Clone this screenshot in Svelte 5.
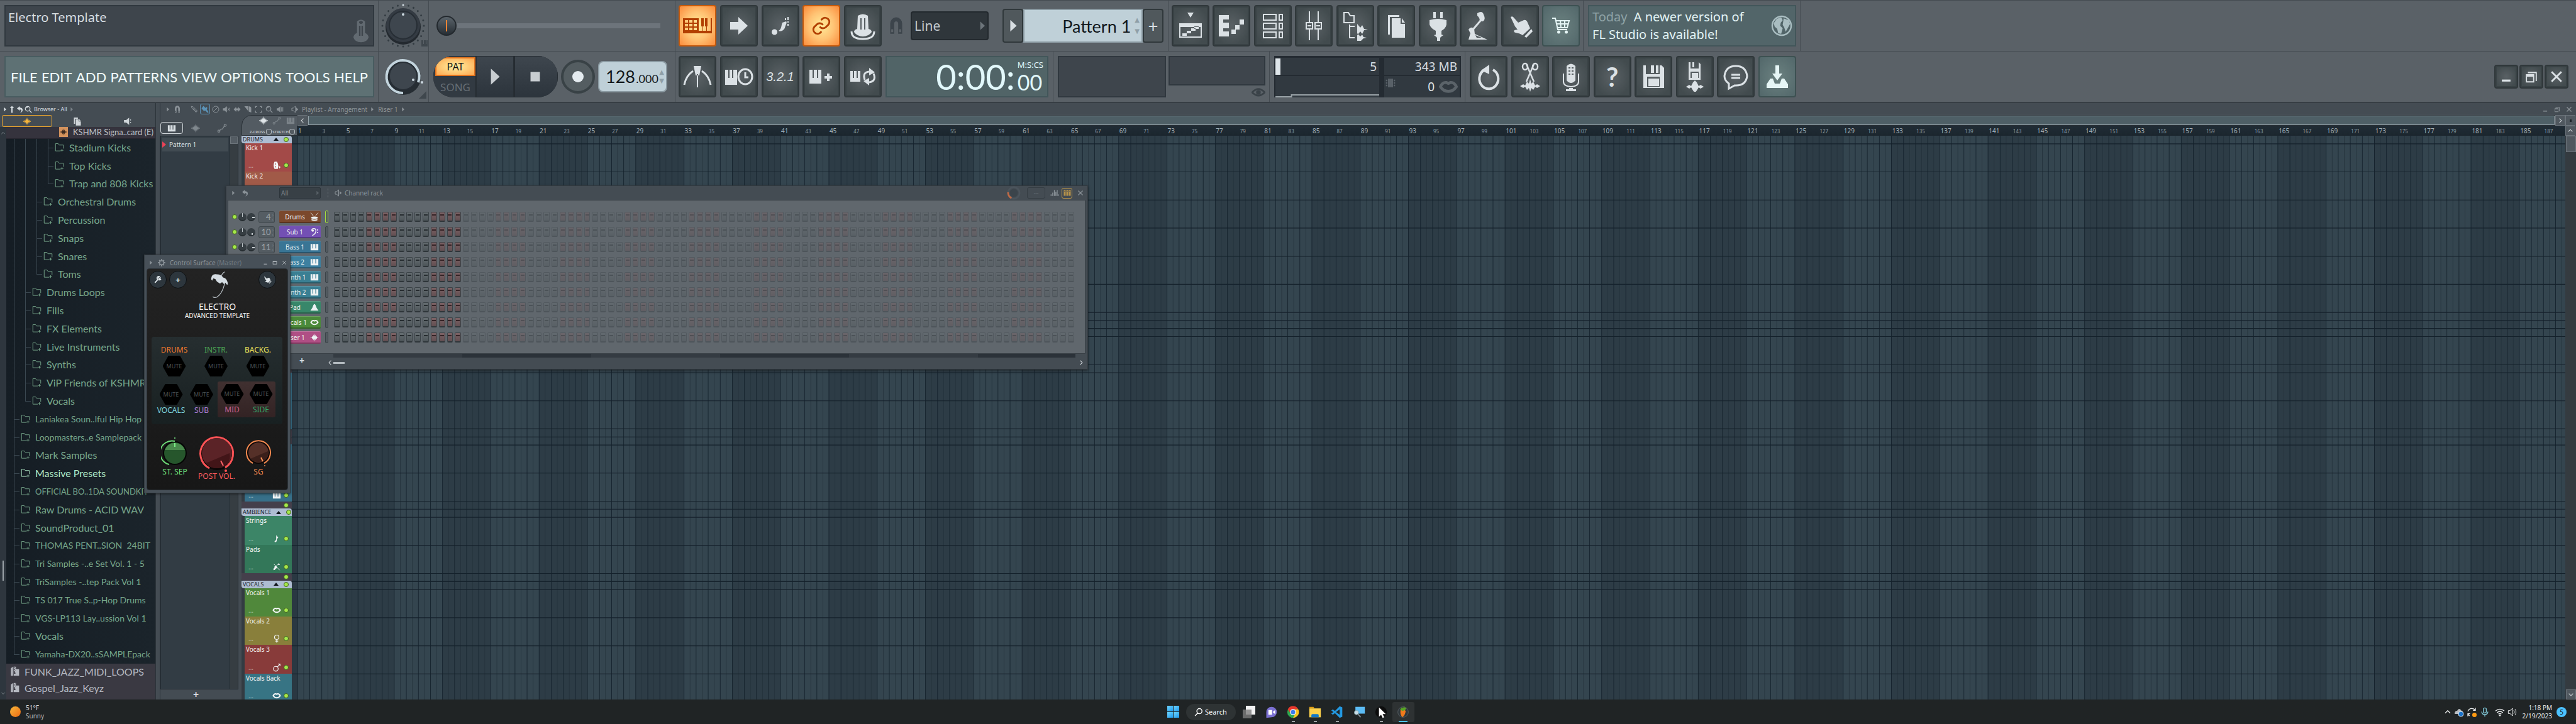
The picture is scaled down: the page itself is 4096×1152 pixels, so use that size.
<script>
  const wave = 'M2 24l4-3 3 3 3-9 3 6 3-13 3 9 3-15 3 15 3-9 3 13 3-6 3 9 3-3 4 3-4 3-3-3-3 9-3-6-3 13-3-9-3 15-3-15-3 9-3-13-3 6-3-9-3 3z';
  const ICONS = {
    pianogrid: { f: 'M1 12h46v24H1zM4 15v4h5v-4zM11 15v4h5v-4zM18 15v4h5v-4zM4 21v4h5v-4zM11 21v4h5v-4zM18 21v4h5v-4zM4 27v4h5v-4zM11 27v4h5v-4zM18 27v4h5v-4zM26 12v20h6v-7h-2V12zM34 12v13h-1v7h5v-7h-2V12zM40 12v13h-1v7h6V12z' },
    arrow: { f: 'M10 18h13v-8l15 14-15 14v-8H10z' },
    slide: { f: 'M10 34a4 4 0 1 1 9 0 4 4 0 1 1-9 0M21 32c5-3 4-8 6-13l6-2c2 2-1 6-2 10-1 3-5 7-10 5zM35 10h2v5h-2zM31 12h2v3h-2zM35 17h2v2h-2zM35 21h2v3h-2z' },
    link: { v: '0 0 24 24', w: 2.2, s: 'M10 13a5 5 0 0 0 7.5.5l3-3a5 5 0 0 0-7-7l-1.800 1.700M14 11a5 5 0 0 0-7.500-.5l-3 3a5 5 0 0 0 7 7l1.700-1.700' },
    knob: { f: 'M16 8q8-5 16 0l1 21q5 1 5 5-5 7-14 7t-14-7q0-4 5-5zM20 12v18h2V12zM26 12v18h2V12z', s: 'M6 33q0 12 18 12t18-12', w: 3 },
    thermo: { f: 'M16 5q8-7 16 0v23q8 4 7 10-3 9-15 9T9 38q-1-6 7-10zM20 6q0 4 4 4t4-4q-4-4-8 0zM20 14v20h3V14zM25 14v20h3V14z' },
    magnet: { f: 'M12 40V20a12 13 0 0 1 24 0v20h-8V20q0-5-4-5t-4 5v20zM14 31v6h4v-6zM30 31v6h4v-6z' },
    metronome: { f: 'M18 7h12l-3 15h-6zM23 20h2v21h-2z', s: 'M3 37Q6 22 17 15M45 37Q42 22 31 15', w: 3 },
    pianoclock: { f: 'M2 13h5v13h2V13h4v13h2V13h6v24H2z', s: 'M23 24a11 12 0 1 1 22 0 11 12 0 1 1-22 0M34 17v8h5', w: 3 },
    pianoplus: { f: 'M5 13h5v13h2V13h5v13h2V13h5v22H5zM33 19h4v4h4v4h-4v4h-4v-4h-4v-4h4z' },
    pianocycle: { f: 'M4 15h4v11h2V15h4v11h2V15h4v17H4zM34 10l9 7-9 5zM34 38l-9-7 9-5z', s: 'M27 29Q23 17 34 16M41 19Q46 31 34 33', w: 3 },
    playlist: { f: 'M19 3h10l-5 8zM6 20h36v6H6zM11 36h7v4h-7zM18 32h7v4h-7zM25 28h7v4h-7zM30 25h7v4h-7z', s: 'M7 21h34v21H7z', w: 2 },
    roll: { f: 'M4 7h16v7h-9v5h9v9h-9v5h9v8H4zM24 30h7v7h-7zM30 23h7v7h-7zM37 14h7v8h-7z' },
    rack: { s: 'M9 6h20v9H9zM34 6h5v9h-5zM9 20h20v9H9zM34 20h5v9h-5zM9 34h20v9H9zM34 34h5v9h-5z', w: 2 },
    chip: { f: 'M12 4h24v40H12zM2 8h7v8H2zM2 20h7v8H2zM2 32h7v8H2zM39 8h7v8h-7zM39 20h7v8h-7zM39 32h7v8h-7z' },
    mixer: { s: 'M17 1v18M31 1v18M17 29v18M31 29v18M12 19h10v10H12zM26 19h10v10H26zM14 24h6M28 24h6', w: 2 },
    tree: { f: 'M27 21l5 6 3-4 3 6 6 1-6 1-3 6-3-4-5 6zM27 36l5 5 3-3 2 4 5 1-5 1-4 4-6 1z', s: 'M6 3h7l3 5h6v11H6zM23 25h-8v18h8M15 25v-3', w: 2 },
    pages: { f: 'M11 7h18v3H14v28h-3zM17 12h14v9h7v22H17zM33 12l5 7h-5z' },
    plug: { f: 'M17 2h4v10h-4zM28 2h4v10h-4zM11 15q13-4 27 0v7q-1 6-8 10v6l3 1-3 2-2 2v5h-5v-5l-2-2-3-2 3-1v-6q-8-4-10-10z' },
    lamp: { f: 'M22 4q8-5 10 2 4 8-1 11l-5 0q0-6-4-9zM8 30q4-6 9-1l1 8 20 9H8l3-10zM19 39l2 4h8z', s: 'M15 30l12-14', w: 3 },
    hand: { f: 'M9 10q3-2 5 1l7 8 9-4q4-1 6 4l4 9-12 11q-4-3-11-4-4-1-2-4l5-1-4-5zM31 41l11-12 2 4-10 10z' },
    cart: { s: 'M10 12h5l4 18h15M16 16h21l-3 11H19M17 21h19M23 16l1 11M30 16v11', w: 2, f: 'M18 34a2.500 2.500 0 1 1 5 0 2.500 2.500 0 1 1-5 0M30 34a2.500 2.500 0 1 1 5 0 2.500 2.500 0 1 1-5 0' },
    globe: { s: 'M5 24a19 19 0 1 1 38 0 19 19 0 1 1-38 0', w: 3, f: 'M8 19l6-9 9-3 3 6-4 5-1 6 5 5-3 11-6-1-2-9-5-4zM28 9l10 4 3 7-5 9-4 7-3-9-3-5z' },
    eye: { s: 'M2 24q22-24 44 0-22 22-44 0z', w: 6, f: 'M16 24a8 8 0 1 1 16 0 8 8 0 1 1-16 0' },
    undo: { s: 'M31 13A15 16 0 1 1 16 14', w: 4, f: 'M12 14l13-9v15z' },
    cut: { s: 'M18 4l12 28M30 4L18 32M12 8a4 5 0 1 1 8 0 4 5 0 1 1-8 0M28 8a4 5 0 1 1 8 0 4 5 0 1 1-8 0', w: 2.500, f: 'M8 39l5-3 3 2 3-6 3 3 2-7 2 7 3-3 3 6 3-2 5 3-5 3-3-2-3 5-3-3-2 6-2-6-3 3-3-5-3 2z' },
    mic: { f: 'M17 7q7-7 14 0v23q-7 8-14 0zM20 9v2h3V9zM25 9v2h3V9zM20 14v2h3v-2zM25 14v2h3v-2zM20 19v2h3v-2zM25 19v2h3v-2zM21 42h6v2h5v3H16v-3h5z', s: 'M12 19v13q0 7 12 8 12-1 12-8V19', w: 2 },
    floppy: { f: 'M8 6h4v14h22V6h3l4 4v32H8zM20 6h5v12h-5zM28 6h4v12h-4zM14 24v16h20V24z M16 27h17v12H16z' },
    floppywave: { f: 'M14 1h3v10h13V1l3 3v25H14zM20 1h3v8h-3zM17 16v10h13V16zM19 18h10v8H19zM10 40l5-3 3 2 3-6 3-3 3 3 3 6 3-2 5 3-5 3-3-2-3 5-3 4-3-4-3-5-3 2z' },
    chat: { s: 'M13 35q-7-5-7-12 2-16 18-16t18 16q-2 16-20 15l-9 5zM17 21h14M17 26h14', w: 3 },
    download: { f: 'M21 6h6v13h5l-8 11-8-11h5zM13 27l4 0 3 8h8l3-8h4l6 9v6H7v-6z' },
    minus: { f: 'M9 34h30v7H9z' },
    restore: { f: 'M12 7h31v32h-4V12H12zM5 15h29v29H5zM9 24v16h21V24z' },
    max: { f: 'M4 8h40v32H4zM9 18v17h30V18z' },
    close: { s: 'M7 7l34 34M41 7L7 41', w: 6 },
    wave: { f: wave },
    note: { f: 'M22 4q2 8 10 13-1 5-3 8-1-6-5-7v20q-6 9-12 3 0-8 8-8z' },
    sax: { f: 'M34 4l8 6-4 4-8-2-8 9 4 5q-2 8-8 8-3 8-10 8-6-8 4-14-2-8 6-10l5-1z', s: 'M8 8l32 34', w: 3 },
    kick: { f: 'M12 4h14q10 18 4 40H12Q2 24 12 4zM14 12v10h4V12zM14 27v9h4v-9zM34 26l11 7-6 9z' },
    lips: { s: 'M5 24q5-11 14-10l5 2 5-2q9-1 14 10-7 11-19 11T5 24z', w: 7 },
    female: { s: 'M12 17a12 12 0 1 1 24 0 12 12 0 1 1-24 0M24 29v17M16 38h16', w: 4 },
    male: { s: 'M6 31a13 13 0 1 1 26 0 13 13 0 1 1-26 0M28 21L42 5M31 5h11v11', w: 4 },
    piano: { f: 'M3 8h10v24h4V8h12v24h4V8h12v34H3z' },
    auto: { s: 'M4 38a5 5 0 1 1 10 0 5 5 0 1 1-10 0M34 10a5 5 0 1 1 10 0 5 5 0 1 1-10 0M13 35l7-7h6l9-14', w: 4 },
    speaker: { f: 'M4 17h12L32 4v40L16 31H4zM38 14h4v6h-4zM38 28h4v6h-4z' },
    speakerOut: { s: 'M4 16h9l13-12v40L13 32H4z', w: 4, f: 'M32 12l13 12-13 12z' },
    tri: { f: 'M14 4l22 20-22 20z' },
    up: { f: 'M20 46V16h-9L24 2l13 14h-9v30z' },
    back: { f: 'M4 18L22 4v9q20 1 18 17-2 12-16 16 10-9 8-16-2-6-10-6v9z' },
    mag: { s: 'M5 20a15 15 0 1 1 30 0 15 15 0 1 1-30 0M31 31l14 14M13 16q3-6 9-5', w: 5 },
    pencil: { s: 'M5 5l12 3 26 26-8 9L9 17zM15 17l22 22', w: 4 },
    brush: { f: 'M14 2l14 14 3-9 8 8-4 10 12 17-9 4-10-14-12 2L2 18z' },
    no: { s: 'M4 24a20 20 0 1 1 40 0 20 20 0 1 1-40 0M38 10L10 38', w: 4 },
    mute: { f: 'M2 17h9L27 4v40L11 31H2z', s: 'M32 14l14 20M46 14L32 34', w: 4 },
    slip: { f: 'M2 24L18 8v10h12V8l16 16-16 16V30H18v10z' },
    slice: { f: 'M2 4l24 0v30zM30 4q16 2 16 12v28L30 38z' },
    sel: { s: 'M5 16V5h10M33 5h10v11M43 32v11H33M15 43H5V32', w: 5 },
    play2: { f: 'M4 17h8L28 4v40L12 31H4zM33 10h4v28h-4zM41 10h4v28h-4z' },
    files: { f: 'M5 3h22v7H12v28H5zM16 13h15v12h12v22H16zM34 12l9 10h-9z' },
    folder: { s: 'M30 42H4V5h14l5 7h21v18M37 32v14M30 39h14', w: 3 },
    zip: { f: 'M4 10l10-8v44H4zM17 2h8v4h-5v4h5v4h-5v4h5v4h-5v4l-2 10h8l-2-10h0V2h4v12h15v32H17z' },
    drum: { f: 'M6 26q18-8 36 0v6q-18 7-36 0zM8 36q16 6 32 0v7q-16 6-32 0z', s: 'M4 2l14 18M44 2L30 18', w: 3 },
    bassclef: { s: 'M10 18q-3-12 10-12t12 12q0 16-20 26', w: 5, f: 'M9 17a6 6 0 1 1 12 0 6 6 0 1 1-12 0M38 10h6v6h-6zM38 24h6v6h-6z' },
    pad: { f: 'M2 42Q14 28 18 12q6-12 12 0 4 16 16 30z' },
    wrench: { s: 'M8 41l18-20M40 12l-7 7-6-5 5-7q-10-2-12 6t6 11q9 4 15-3', w: 6 },
    gear: { s: 'M11 24a13 13 0 1 1 26 0 13 13 0 1 1-26 0', w: 6, f: 'M20 1h8v8h-8zM20 39h8v8h-8zM1 20h8v8H1zM39 20h8v8h-8zM6 10l5-5 6 6-5 5zM31 37l5-5 6 6-5 5zM6 38l5 5 6-6-5-5zM31 11l5 5 6-6-5-5z' },
    bars: { f: 'M2 32h5v8H2zM11 22h5v18h-5zM20 8h5v32h-5zM28 18h5v22h-5zM36 8h4v32h-4zM43 32h4v8h-4z' },
    steps: { f: 'M2 6h12v36H2zM18 6h12v36H18zM34 6h12v36H34zM5 12v3h6v-3zM21 12v3h6v-3zM37 12v3h6v-3z' },
    left: { s: 'M31 8L15 24l16 16', w: 5 },
    right: { s: 'M17 8l16 16-16 16', w: 5 },
    chup: { s: 'M8 31l16-16 16 16', w: 5 },
    chdown: { s: 'M8 17l16 16 16-16', w: 5 },
    search: { s: 'M14 19a14 14 0 1 1 28 0 14 14 0 1 1-28 0M18 30L4 45', w: 5 },
    wifi: { s: 'M3 19q21-18 42 0M10 27q14-12 28 0M17 34q7-6 14 0', w: 4, f: 'M20 40a4 4 0 1 1 8 0 4 4 0 1 1-8 0' },
    vol: { s: 'M4 17h8L24 6v36L12 31H4zM30 16q6 8 0 16M36 10q10 14 0 28', w: 3 },
    taskmic: { s: 'M17 8q7-8 14 0v16q-7 9-14 0zM9 22q2 14 15 14t15-14M24 36v10', w: 4 },
    sync: { s: 'M6 20Q14 2 34 9l8 6M42 4v12H31M6 44V32h11M6 33l8 9', w: 4 }
  };

  const topLeft = [['pianogrid', 'Typing keyboard', 'on'], ['arrow', 'Step edit'], ['slide', 'Slide'], ['link', 'Multilink', 'on'], ['knob', 'Controllers']];
  const botLeft = [['metronome', 'Metronome'], ['pianoclock', 'Wait for input'], ['321', 'Countdown'], ['pianoplus', 'Overdub'], ['pianocycle', 'Loop record']];
  const tools = [['playlist', 'Playlist'], ['roll', 'Piano roll'], ['rack', 'Channel rack'], ['mixer', 'Mixer'], ['tree', 'Browser'], ['pages', 'Plugin picker'], ['plug', 'Plugins'], ['lamp', 'Tempo tapper'], ['hand', 'Touch controllers'], ['cart', 'Shop', 'green']];
  const actions = [['undo', 'Undo'], ['cut', 'Edit audio'], ['mic', 'Record audio'], ['?', 'Help'], ['floppy', 'Save'], ['floppywave', 'Render'], ['chat', 'Feedback'], ['download', 'Download update', 'green']];
  const menus = ['FILE', 'EDIT', 'ADD', 'PATTERNS', 'VIEW', 'OPTIONS', 'TOOLS', 'HELP'];

  const folders = [
    [3, 'Stadium Kicks'], [3, 'Top Kicks'], [3, 'Trap and 808 Kicks', 1], [2, 'Orchestral Drums'], [2, 'Percussion'], [2, 'Snaps'], [2, 'Snares'], [2, 'Toms', 1],
    [1, 'Drums Loops'], [1, 'Fills'], [1, 'FX Elements'], [1, 'Live Instruments'], [1, 'Synths'], [1, 'ViP Friends of KSHMR'], [1, 'Vocals', 1],
    [0, 'Laniakea Soun..lful Hip Hop'], [0, 'Loopmasters..e Samplepack'], [0, 'Mark Samples'], [0, 'Massive Presets'], [0, 'OFFICIAL BO..1DA SOUNDKIT'], [0, 'Raw Drums - ACID WAV'],
    [0, 'SoundProduct_01'], [0, 'THOMAS PENT..SION  24BIT'], [0, 'Tri Samples -..e Set Vol. 1 - 5'], [0, 'TriSamples -..tep Pack Vol 1'], [0, 'TS 017 True S..p-Hop Drums'], [0, 'VGS-LP113 Lay..ussion Vol 1'], [0, 'Vocals'], [0, 'Yamaha-DX20..sSAMPLEpack', 1]
  ];

  const tracks = [
    { h: 'DRUMS' }, { n: 'Kick 1', c: 'red', i: 'kick' }, { n: 'Kick 2', c: 'rust', i: 'kick' }, { c: 'rust' }, { c: 'rust' }, { c: 'rust' }, { c: 'rust' },
    { gap: 1 }, { gap: 1 }, { gap: 1 }, { c: 'blue' }, { gap: 1 }, { c: 'blue' }, { c: 'blue' },
    { gap: 1 }, { gap: 1 }, { c: 'blue' }, { c: 'blue', i: 'piano' },
    { gap: 1 }, { h: 'AMBIENCE' }, { n: 'Strings', c: 'sea', i: 'note' }, { n: 'Pads', c: 'pine', i: 'sax' },
    { gap: 1 }, { h: 'VOCALS' }, { n: 'Vocals 1', c: 'leaf', i: 'lips' }, { n: 'Vocals 2', c: 'olive', i: 'female' }, { n: 'Vocals 3', c: 'brick', i: 'male' }, { n: 'Vocals Back', c: 'cyan', i: 'lips' }
  ];
  let y = 0;
  const rowLines = tracks.map((t) => (y += t.c ? 56 : 16));
  const bars = Array.from({ length: 94 }, (_, i) => i * 2 + 1);

  const channels = [
    ['4', 'Drums', 'c-brown', 'drum'], ['10', 'Sub 1', 'c-violet', 'bassclef'], ['11', 'Bass 1', 'c-blue', 'piano'], ['12', 'Bass 2', 'c-sky', 'piano'],
    ['20', 'Synth 1', 'c-teal', 'piano'], ['21', 'Synth 2', 'c-teal', 'piano'], ['25', 'Pad', 'c-green', 'pad'], ['30', 'Vocals 1', 'c-leaf', 'lips'], ['40', 'Riser 1', 'c-pink', 'wave']
  ];
  const steps = Array.from({ length: 92 }, (_, i) => i);
  const toolIcons = ['pencil', 'brush', 'no', 'mute', 'slip', 'slice', 'sel', 'mag', 'play2'];
  const dots = Array.from({ length: 24 }, (_, i) => i * 15);
</script>

{#snippet icon(name, size = 's48')}
  {@const d = ICONS[name]}
  <svg class="ic {size}" viewBox={d.v ?? '0 0 48 48'} aria-hidden="true">
    {#if d.f}<path d={d.f} fill="currentColor" fill-rule="evenodd" />{/if}
    {#if d.s}<path d={d.s} fill="none" stroke="currentColor" stroke-width={d.w ?? 2} />{/if}
  </svg>
{/snippet}

{#snippet toolButton([name, label, kind])}
  <button class="tb {kind ?? ''}" aria-label={label}>
    {#if name === '321'}<i class="count">3.2.1</i>
    {:else if name === '?'}<b class="q">?</b>
    {:else if name === 'link'}{@render icon(name, 's32')}
    {:else}{@render icon(name)}{/if}
  </button>
{/snippet}

<div class="app">
  <header class="toolbar">
    <div class="trow">
      <section class="cell w-title"><div class="panel title"><span>Electro Template</span><span class="thermo">{@render icon('thermo', 's38')}</span></div></section>
      <section class="cell w-knob">
        <svg class="bigknob" viewBox="0 0 78 78" aria-label="Main pitch" role="img">
          {#each dots as a}<circle cx="39" cy="6" r="1.500" fill={a === 0 ? '#d5e0e6' : '#333c42'} transform="rotate({a} 39 39)" />{/each}
          <circle cx="39" cy="41" r="28" fill="#23292f" /><circle cx="39" cy="38" r="27" fill="#343b43" /><circle cx="39" cy="38" r="22" fill="#3e464e" stroke="#272e35" stroke-width="2" /><circle cx="39" cy="21" r="2" fill="#cbd8df" />
          <path d="M68 62h3v6h1v-6h3v6h1v-6h2v10H68z" fill="#3f474d" />
        </svg>
      </section>
      <section class="cell w-mid sliderbox"><input type="range" min="0" max="100" value="0" aria-label="Song position" /></section>
      <section class="cell w-center">
        <div class="btns">{#each topLeft as b}{@render toolButton(b)}{/each}</div>
        <span class="magnet">{@render icon('magnet', 's38')}</span>
        <div class="snapwrap"><select class="snap" aria-label="Snap"><option>Line</option></select>{@render icon('tri', 's16')}</div>
        <div class="pattern">
          <button class="pbtn" aria-label="Pattern menu">{@render icon('tri', 's22')}</button>
          <button class="pname">Pattern 1<span class="spin">▲<br />▼</span></button>
          <button class="pbtn plus" aria-label="Add pattern">+</button>
        </div>
      </section>
      <section class="cell w-tools"><div class="btns">{#each tools as b}{@render toolButton(b)}{/each}</div></section>
      <section class="cell w-news"><div class="panel news"><p><span>Today</span> A newer version of<br />FL Studio is available!</p><span class="globe">{@render icon('globe', 's38')}</span></div></section>
    </div>
    <div class="trow">
      <section class="cell w-title"><nav class="panel menu">{#each menus as m}<button>{m}</button>{/each}</nav></section>
      <section class="cell w-knob">
        <svg class="bigknob" viewBox="0 0 78 78" aria-label="Main volume" role="img">
          <circle cx="39" cy="40" r="28" fill="#262d33" /><path d="M39 65A26 26 0 1 1 63 48" fill="none" stroke="#c3d4dd" stroke-width="4" /><circle cx="39" cy="38" r="22" fill="#3e464e" stroke="#272e35" stroke-width="2" /><circle cx="55" cy="44" r="2" fill="#cbd8df" /><circle cx="69" cy="48" r="2" fill="#cbd8df" /><path d="M76 62v12H64z" fill="#3f474d" />
        </svg>
      </section>
      <section class="cell w-mid transport">
        <div class="tgroup">
          <div class="mode"><button class="pat">PAT</button><button class="song">SONG</button></div>
          <button class="tp" aria-label="Play"><svg class="ic s32" viewBox="0 0 30 30"><path d="M9 3l13 12L9 27z" fill="#c8cdd1" /></svg></button>
          <button class="tp stop" aria-label="Stop"><svg class="ic s32" viewBox="0 0 30 30"><path d="M8 8h14v14H8z" fill="#c8cdd1" /></svg></button>
        </div>
        <button class="rec" aria-label="Record"><span></span></button>
        <button class="tempo"><b>128</b>.000<span class="spin">▲<br />▼</span></button>
      </section>
      <section class="cell w-timer">
        <div class="btns">{#each botLeft as b}{@render toolButton(b)}{/each}</div>
        <div class="panel time"><span class="t1">0:00:</span><span class="t3"><small>M:S:CS</small>00</span></div>
      </section>
      <section class="cell w-scope"><div class="panel scope"></div><div class="scope2"><div class="panel"></div>{@render icon('eye', 's22')}</div></section>
      <section class="cell w-cpu">
        <div class="cpu">
          <div class="load"><i></i>5</div><div>343 MB</div>
          <div class="graph"><svg viewBox="0 0 168 34" preserveAspectRatio="none"><path d="M0 33h26v-3h142" fill="none" stroke="#9aa3a8" stroke-width="2" /></svg></div>
          <div class="poly"><span class="chip">{@render icon('chip', 's16')}</span>0 <span class="lip">{@render icon('lips', 's32')}</span></div>
        </div>
      </section>
      <section class="cell w-actions"><div class="btns">{#each actions as b}{@render toolButton(b)}{/each}</div></section>
      <div class="winbtns">
        <button class="tb sm" aria-label="Minimize">{@render icon('minus', 's22')}</button><button class="tb sm" aria-label="Restore">{@render icon('restore', 's22')}</button><button class="tb sm" aria-label="Close">{@render icon('close', 's22')}</button>
      </div>
    </div>
  </header>

  <main class="work">
    <aside class="browser">
      <div class="bhead">{@render icon('tri', 's8')}{@render icon('up', 's12')}{@render icon('back', 's12')}{@render icon('mag', 's12')}<span>Browser - All</span><em>{@render icon('tri', 's8')}</em></div>
      <div class="btabs"><button class="sel" aria-label="All">{@render icon('wave', 's14')}</button><button aria-label="Files">{@render icon('files', 's14')}</button><button aria-label="Sounds">{@render icon('speaker', 's14')}</button></div>
      <div class="bbody">
        <div class="gutter">{@render icon('chup', 's8')}<i></i>{@render icon('chdown', 's8')}</div>
        <div class="tree">
          <div class="kshmr"><span class="clipicon">{@render icon('wave', 's12')}</span>KSHMR Signa..card (E)</div>
          <ul>
            {#each folders as [lvl, name, last]}
              <li class:hot={name === 'Massive Presets'} class:long={name.length > 22} class:caps={/^[A-Z]{8}/.test(name)}>
                {#each { length: lvl } as _}<i class="guide"></i>{/each}<i class="guide tick" class:last></i>{@render icon('folder', 's15')}<span>{name}</span>
              </li>
            {/each}
          </ul>
          <div class="zips"><p>{@render icon('zip', 's16')}FUNK_JAZZ_MIDI_LOOPS</p><p>{@render icon('zip', 's16')}Gospel_Jazz_Keyz</p></div>
        </div>
      </div>
    </aside>

    <section class="playlist">
      <div class="phead">
        {@render icon('tri', 's8')}<span class="m">{@render icon('magnet', 's16')}</span>
        <div class="ptools">{#each toolIcons as t}<button class:act={t === 'brush'} aria-label={t}>{@render icon(t, 's12')}</button>{/each}</div>
        {@render icon('speakerOut', 's12')}<span class="ptitle">Playlist - Arrangement</span>{@render icon('tri', 's8')}<span>Riser 1</span>{@render icon('tri', 's8')}
        <div class="pwin">{@render icon('minus', 's10')}{@render icon('restore', 's10')}{@render icon('close', 's10')}</div>
      </div>
      <div class="pbody">
        <div class="picker">
          <div class="pktabs"><button class="sel" aria-label="Patterns">{@render icon('piano', 's14')}</button><button aria-label="Audio">{@render icon('wave', 's16')}</button><button aria-label="Automation">{@render icon('auto', 's16')}</button></div>
          <div class="pklist"><div class="items"><button><i></i>Pattern 1</button></div><div class="bar"><span></span></div></div>
          <button class="pkadd" aria-label="Add">+</button>
        </div>
        <div class="arr">
          <div class="corner">
            <div>{@render icon('wave', 's16')}<em>{@render icon('auto', 's14')}{@render icon('piano', 's14')}</em></div>
            <div class="chk"><label>Z-CROSS<input type="checkbox" /></label><label>STRETCH<input type="checkbox" /></label></div>
          </div>
          <div class="hscroll"><button aria-label="Scroll left">{@render icon('left', 's10')}</button><span></span><button aria-label="Scroll right">{@render icon('right', 's10')}</button></div>
          <button class="dot" aria-label="Zoom"><i></i></button>
          <div class="ruler"><div>{#each bars as b}<span class:major={b % 4 === 1}>{b}</span>{/each}</div></div>
          <button class="vup" aria-label="Scroll up">{@render icon('chup', 's10')}</button>
          <div class="canvas">
            <div class="tracks">
              {#each tracks as t}
                {#if t.h}<div class="thead"><span>{t.h}</span><i class="tri"></i><i class="led"></i></div>
                {:else if t.gap}<div class="tgap"><i class="led"></i></div>
                {:else}<div class="track {t.c}"><span>{t.n ?? ''}</span><div><em>...</em>{#if t.i}{@render icon(t.i, 's14')}{/if}<i class="led"></i></div></div>{/if}
              {/each}
            </div>
            <svg class="lanes" viewBox="0 0 4519 1123" preserveAspectRatio="none" aria-hidden="true">
              <defs>
                <pattern id="block" x="11" y="0" width="192" height="1123" patternUnits="userSpaceOnUse"><path d="M0 0h96v1123H0z" fill="#34454f" /><path d="M96 0h96v1123H96z" fill="#2d3c46" /></pattern>
                <pattern id="bar" x="11" y="0" width="24" height="1123" patternUnits="userSpaceOnUse"><path d="M0 0h1v1123H0z" fill="#101e28" /><path d="M12 0h1v1123h-1z" fill="#22313b" /></pattern>
              </defs>
              <path d="M0 0h4519v1123H0z" fill="#2a3842" /><path d="M11 0h4508v1123H11z" fill="url(#block)" /><path d="M11 0h4508v1123H11z" fill="url(#bar)" />
              {#each rowLines as l}<path d="M0 {l}h4519" stroke="#14212b" stroke-width="1.500" />{/each}
            </svg>
          </div>
          <div class="vscroll"><i></i><button aria-label="Scroll down">{@render icon('chdown', 's10')}</button></div>
        </div>
      </div>
    </section>

    <section class="rack">
      <div class="rhead">
        {@render icon('tri', 's8')}<span class="bk">{@render icon('back', 's12')}</span>
        <div class="rsel"><select aria-label="Channel filter"><option>All</option></select>{@render icon('tri', 's8')}</div>
        <i class="dotted"></i>{@render icon('speakerOut', 's12')}<span>Channel rack</span>
        <div class="rright"><svg class="ic s22" viewBox="0 0 24 24"><circle cx="12" cy="12" r="10" fill="none" stroke="#4b545c" stroke-width="3" /><circle cx="12" cy="12" r="7" fill="#3b444b" /><path d="M2 11q0 7 6 10" fill="none" stroke="#c06a45" stroke-width="3" /></svg><span class="rdisp">---</span>{@render icon('bars', 's14')}<button class="stepbtn" aria-label="Step view">{@render icon('steps', 's12')}</button><button aria-label="Close rack">{@render icon('close', 's10')}</button></div>
      </div>
      <div class="rbody">
        {#each channels as [num, name, color, ic], r}
          <div class="ch">
            <i class="led"></i><i class="kn"></i><i class="kn" class:side={r % 2 === 0} class:low={r % 2}></i>
            <span class="num">{num}<small>›<br />‹</small></span>
            <button class="cb {color}"><span>{name}</span>{@render icon(ic, 's14')}</button>
            <i class="selr" class:on={r === 0}></i>
            <div class="steps">{#each steps as s}<button class:alt={(s >> 2) % 2} class:off={s > 15} aria-label="Step {s + 1}"></button>{/each}</div>
          </div>
        {/each}
      </div>
      <div class="rfoot"><span class="add">+</span><div><i class="strip"></i><p>{@render icon('left', 's10')}<b></b><em>{@render icon('right', 's10')}</em></p></div></div>
    </section>

    <section class="surface">
      <div class="shead">{@render icon('tri', 's8')}{@render icon('gear', 's12')}<span>Control Surface <em>(Master)</em></span><div>{@render icon('minus', 's8')}{@render icon('max', 's8')}{@render icon('close', 's8')}</div></div>
      <div class="sbody">
        <div class="stop-row">
          <button class="round" aria-label="Options">{@render icon('wrench', 's14')}</button><button class="round" aria-label="Add control">+</button>
          <svg class="fruit" viewBox="0 0 34 52"><path d="M1 14Q2 4 12 6q8 0 12 6 9 2 9 14l-3-1-1-3-3 3-4-4-4 3-6-4-3-5-4-1-2 4-2-2z" fill="#d5dde3" /><path d="M27 1q-5 3-7 9M27 24Q22 44 12 50q-5 2-8-1" fill="none" stroke="#b9c1c7" stroke-width="1.500" /></svg>
          <button class="round tap" aria-label="Edit controls">{@render icon('hand', 's16')}</button>
        </div>
        <h1>ELECTRO</h1><h2>ADVANCED TEMPLATE</h2>
        <div class="mutes">
          <div class="r3">
            {#each [['DRUMS', 'o'], ['INSTR.', 'g'], ['BACKG.', 'y']] as [n, c]}<div class="mc"><span class={c}>{n}</span><button class="hex">MUTE</button></div>{/each}
          </div>
          <div class="r4">
            <div class="mc"><button class="hex">MUTE</button><span class="c">VOCALS</span></div><div class="mc"><button class="hex">MUTE</button><span class="v">SUB</span></div>
            <div class="redbox"><div class="mc"><button class="hex">MUTE</button><span class="p">MID</span></div><div class="mc"><button class="hex">MUTE</button><span class="s">SIDE</span></div></div>
          </div>
        </div>
        <div class="knobs">
          <div class="sep"><svg viewBox="0 0 44 50"><circle cx="22" cy="27" r="19" fill="#050505" /><path d="M13 45A19 19 0 0 1 22 8" fill="none" stroke="#6fe07a" stroke-width="2" /><circle cx="22" cy="27" r="17" fill="#26562c" /><path d="M6 22a17 17 0 0 1 32 0z" fill="#4a8a4d" /><path d="M22 11v6" stroke="#7cf088" stroke-width="2" /><circle cx="22" cy="3" r="1" fill="#7cf088" /></svg>ST. SEP</div>
          <div class="post"><svg viewBox="0 0 64 60"><circle cx="32" cy="30" r="27" fill="#0b0606" /><path d="M20 54A26 26 0 1 1 45 53" fill="none" stroke="#ff5356" stroke-width="3" /><circle cx="32" cy="30" r="24" fill="#5b2327" /><path d="M14 46q8-3 38-16 4 20-20 24-12 0-18-8z" fill="#421518" /><path d="M38 42l4 8" stroke="#ff6467" stroke-width="2" /><circle cx="46" cy="58" r="2" fill="#ff5356" /></svg>POST VOL.</div>
          <div class="sg"><svg viewBox="0 0 44 50"><circle cx="22" cy="26" r="18" fill="#0b0606" /><path d="M13 43A19 19 0 1 1 31 43" fill="none" stroke="#f4894f" stroke-width="2" /><circle cx="22" cy="26" r="16" fill="#553028" /><path d="M9 36l28-12q2 16-15 17-8 0-13-5z" fill="#3b1f1a" /><path d="M26 34l3 6" stroke="#ff9458" stroke-width="2" /><circle cx="32" cy="47" r="1" fill="#f4894f" /></svg>SG</div>
        </div>
      </div>
    </section>
  </main>

  <footer class="taskbar">
    <div class="weather"><i></i><p>51°F<br /><span>Sunny</span></p></div>
    <div class="apps">
      <button class="win" aria-label="Start"><i></i><i></i><i></i><i></i></button>
      <button class="srch">{@render icon('search', 's14')}Search</button>
      <button class="task" aria-label="Task view"><svg class="ic s24" viewBox="0 0 24 24"><path d="M7 2h15v14H7z" fill="#f2f2f2" /><path d="M2 8h14v14H2z" fill="#7d7d7d" opacity=".8" /></svg></button>
      <button class="task" aria-label="Chat"><svg class="ic s20" viewBox="0 0 24 24"><path d="M3 23V12A10 10 0 1 1 13 22z" fill="#7a6fd0" /><path d="M7 8h7v9H7zM16 11l4-3v8l-4-3z" fill="#fff" /></svg></button>
      <button class="task run" aria-label="Chrome"><svg class="ic s20" viewBox="0 0 24 24"><circle cx="12" cy="12" r="11" fill="#2da94f" /><path d="M2 7A11 11 0 0 1 22 7H12L7 14z" fill="#e8372c" /><path d="M22 7a11 11 0 0 1-10 16l5-9-2-7z" fill="#fcc31e" /><circle cx="12" cy="12" r="5" fill="#3b7ded" stroke="#fff" stroke-width="1.500" /></svg></button>
      <button class="task run" aria-label="File Explorer"><svg class="ic s20" viewBox="0 0 24 24"><path d="M1 2h8l2 3H1z" fill="#d99a12" /><path d="M1 5h22v17H1z" fill="#fcd04b" /><path d="M5 22v-4q0-2 2-2h10q2 0 2 2v4z" fill="#1478c8" /></svg></button>
      <button class="task run" aria-label="Code"><svg class="ic s20" viewBox="0 0 24 24"><path d="M17 1l5 2v18l-5 2L8 14l-4 3-3-2 4-3-4-3 3-2 4 3zM17 7l-7 5 7 5z" fill="#2398e0" fill-rule="evenodd" /></svg></button>
      <button class="task" aria-label="Remote"><svg class="ic s20" viewBox="0 0 24 24"><path d="M5 2h18v13H5z" fill="#5cbcf5" /><circle cx="7" cy="13" r="4" fill="#c9dbe6" stroke="#8aa" /><path d="M10 16l5 6" stroke="#8b98a0" stroke-width="2" /></svg></button>
      <button class="task run" aria-label="Pointer"><svg class="ic s20" viewBox="0 0 24 24"><circle cx="12" cy="12" r="11" fill="#0c0c0c" /><path d="M8 3v18l4-4 3 6 3-1-3-6h6z" fill="#fff" /></svg></button>
      <button class="task cur" aria-label="FL Studio"><svg class="ic s20" viewBox="0 0 24 24"><circle cx="12" cy="12" r="10" fill="#30373b" stroke="#59636a" /><path d="M7 9q6-4 10 1-1 8-6 12-5-4-4-13z" fill="#f07a1c" /><path d="M6 7l4-4 2 2 2-5 1 4 4 0-3 4-5 2z" fill="#5aa524" /></svg></button>
    </div>
    <div class="tray">
      {@render icon('chup', 's12')}
      <svg class="ic s16" viewBox="0 0 16 16"><path d="M1 11q0-5 4-5 3-6 7 0 3 1 3 5z" fill="#b9bcbf" /><circle cx="11" cy="11" r="4" fill="#1b74cc" stroke="#d6e8f8" /></svg>
      <span class="sync">{@render icon('sync', 's16')}<i></i></span><span class="tm">{@render icon('taskmic', 's16')}</span>{@render icon('wifi', 's16')}{@render icon('vol', 's16')}
      <p>1:18 PM<br />2/19/2023</p><b>5</b>
    </div>
  </footer>
</div>

<style>
  :global(body) { margin: 0; background: #444c53; }
  * { box-sizing: border-box; }
  button { appearance: none; border: 0; padding: 0; margin: 0; background: none; color: inherit; font: inherit; display: flex; align-items: center; justify-content: center; }
  p, h1, h2, ul { margin: 0; padding: 0; font-weight: 400; }
  em { font-style: normal; }
  .app { height: 100vh; display: flex; flex-direction: column; overflow: hidden; font-family: "Noto Sans", "Open Sans", sans-serif; font-size: 10px; color: #d8dee2; }
  .ic { display: block; flex: none; }
  .s8 { width: 8px; height: 8px; }
  .s10 { width: 10px; height: 10px; }
  .s12 { width: 12px; height: 12px; }
  .s14 { width: 14px; height: 14px; }
  .s15 { width: 15px; height: 15px; }
  .s16 { width: 16px; height: 16px; }
  .s20 { width: 20px; height: 20px; }
  .s22 { width: 22px; height: 22px; }
  .s24 { width: 24px; height: 24px; }
  .s32 { width: 32px; height: 32px; }
  .s38 { width: 38px; height: 38px; }
  .s48 { width: 48px; height: 48px; }

  .toolbar { background: #5a6167; border-top: 1px solid #444b51; flex: none; }
  .trow { display: flex; height: 81px; border-bottom: 1px solid #444b51; }
  .cell { display: flex; align-items: center; padding: 0 6px 0 7px; border-right: 1px solid #454c52; flex: none; }
  .w-title { width: 602px; }
  .w-knob { width: 80px; padding: 0; }
  .w-mid { width: 392px; }
  .w-center { width: 784px; padding: 0 7px 0 5px; }
  .w-timer { width: 601px; padding: 0 7px 0 5px; }
  .w-tools { width: 660px; padding: 0 5px; }
  .w-news { width: 345px; }
  .w-scope { width: 344px; gap: 4px; }
  .w-cpu { width: 311px; }
  .w-actions { width: 533px; border: 0; }
  .panel { height: 66px; border: 2px solid #30383f; background: #3e454c; flex: 1; display: flex; }
  .title { font-size: 20px; line-height: 28px; padding: 4px 0 4px 4px; justify-content: space-between; }
  .thermo { color: #626a71; align-self: flex-end; }
  .menu { background: #5e7174; border-color: #485c60; font: 22px Lato, "Noto Sans", sans-serif; color: #f1fbfb; padding: 0 8px; justify-content: space-between; }
  .bigknob { width: 78px; height: 78px; }
  .sliderbox input { appearance: none; width: 356px; height: 34px; margin: 0 0 0 5px; background: linear-gradient(#6d747b, #6d747b) center / 100% 8px no-repeat; }
  .sliderbox input::-webkit-slider-thumb { appearance: none; width: 32px; height: 32px; border-radius: 50%; border: 2px solid #23292e; background: linear-gradient(90deg, transparent 13px, #ef8435 13px, #ef8435 15px, transparent 15px) center / 100% 18px no-repeat, linear-gradient(#5a636a, #272e34); }
  .btns { display: grid; grid-auto-flow: column; grid-auto-columns: 60px; justify-content: space-between; width: 323px; flex: none; }
  .w-tools .btns { width: 649px; }
  .w-actions .btns { width: 519px; }
  .tb { height: 66px; border: 2px solid #30383b; border-radius: 4px; background: radial-gradient(#5a6165, #424b4e 75%); color: #dbe1e5; box-shadow: inset 0 0 0 2px #394245; }
  .tb.on { background: radial-gradient(#ffeb9a, #ffc374 50%, #fb8c3c); border-color: #c65a0c; color: #b23f00; box-shadow: none; }
  .tb.green { background: radial-gradient(#6b8180, #52676a); border-color: #3d5152; box-shadow: none; color: #e6f6f6; }
  .tb.sm { width: 38px; height: 38px; }
  .count { font: italic 20px "Liberation Sans", sans-serif; }
  .q { font: 700 42px Lato, sans-serif; }
  .magnet { color: #3c444b; margin: 0 4px; }
  .snapwrap { width: 124px; height: 46px; border: 2px solid #23292e; border-radius: 4px; background: #2f363b; display: flex; align-items: center; color: #6d757b; }
  .snap { appearance: none; flex: 1; height: 100%; border: 0; background: none; color: #c3cacf; font: 21px "Noto Sans", sans-serif; padding: 0 0 0 4px; min-width: 0; }
  .pattern { display: flex; height: 54px; margin-left: auto; }
  .pbtn { width: 33px; border: 2px solid #30383b; border-radius: 4px; background: #50585c; }
  .plus { font-size: 28px; }
  .pname, .tempo { background: #bfd0d8; color: #11171b; border: 2px solid #8b9aa2; font-family: Lato, "Noto Sans", sans-serif; }
  .pname { width: 190px; font-size: 27px; justify-content: flex-end; gap: 6px; }
  .spin { font: 10px/18px "DejaVu Sans", sans-serif; color: #8f9fa7; padding-right: 3px; }
  .news { background: #526569; border-color: #42565a; padding: 0 2px 0 5px; align-items: center; justify-content: space-between; font-size: 20px; line-height: 28px; color: #e3f4f6; }
  .news p span { color: #8fa3a7; margin-right: 5px; }
  .globe { color: #a9bdc1; }
  .transport { gap: 5px; }
  .tgroup { display: flex; height: 66px; width: 198px; gap: 1px; border-radius: 32px; overflow: hidden; background: #23292f; flex: none; }
  .mode { width: 67px; display: grid; grid-template-rows: 30px 1fr; background: #323a42; padding: 2px 0 0 3px; font-size: 16px; }
  .pat { background: radial-gradient(#fff0a0, #ffa850); border: 2px solid #e0721e; border-radius: 14px 0 0 0; color: #111; }
  .song { color: #666e75; font-size: 17px; }
  .tp { width: 60px; background: linear-gradient(#3e464e, #2c343c); border: 1px solid #272e34; }
  .stop { width: 69px; padding-right: 4px; }
  .rec { width: 54px; height: 54px; border-radius: 50%; background: #545d61; border: 4px solid #394246; flex: none; }
  .rec span { width: 18px; height: 18px; border-radius: 50%; background: #e4ebef; }
  .tempo { width: 110px; height: 50px; border-radius: 8px; font-size: 18px; align-items: baseline; justify-content: space-between; padding-left: 10px; }
  .tempo b { font-size: 27px; line-height: 46px; font-weight: 400; }
  .tempo .spin { align-self: center; line-height: 14px; }
  .time { margin-left: 6px; background: #516467; border-color: #42565a; color: #e2f8fb; font-family: Lato, "Noto Sans", sans-serif; align-items: center; justify-content: flex-end; padding-right: 6px; gap: 4px; }
  .t1 { font-size: 56px; line-height: 60px; }
  .t3 { font-size: 34px; line-height: 38px; display: flex; flex-direction: column; align-items: flex-start; }
  .t3 small { font: 13px/18px "Noto Sans", sans-serif; }
  .scope { flex: 0 0 172px; }
  .scope2 { height: 66px; flex: 1; display: flex; flex-direction: column; align-items: flex-end; color: #3a4248; }
  .scope2 .panel { width: 100%; flex: 0 0 47px; }
  .cpu { flex: 1; height: 66px; background: #242b32; display: grid; grid-template-columns: 1fr 120px; grid-template-rows: 27px 1fr; gap: 2px 8px; padding: 3px 2px 0; font-size: 19px; }
  .cpu > div { background: #313940; display: flex; align-items: center; justify-content: flex-end; padding: 0 4px; }
  .load i { width: 8px; height: 26px; background: #dfe6ea; margin: 0 auto 0 -4px; }
  .cpu .graph { padding: 0; }
  .graph svg { width: 100%; height: 34px; }
  .cpu .poly { padding: 0 2px; color: #e0e6ea; gap: 6px; }
  .chip { color: #596168; margin: 0 auto 12px 0; }
  .lip { color: #5b6369; }
  .winbtns { margin: 0 12px 0 auto; display: flex; gap: 2px; align-items: center; }

  .work { flex: 1; min-height: 0; display: flex; position: relative; border-top: 1px solid #2f363c; }
  .browser { width: 248px; flex: none; display: flex; flex-direction: column; background: #444c53; border-right: 1px solid #2c343a; }
  .bhead { height: 19px; display: flex; align-items: center; gap: 1px; padding-left: 4px; color: #d6dce0; font-size: 9px; }
  .bhead span { margin: 0 2px; }
  .bhead em { color: #7a8289; }
  .btabs { height: 19px; display: grid; grid-template-columns: repeat(3, 80px); padding-left: 3px; color: #cfd5d9; }
  .btabs .sel { border: 1px solid #f0a82c; border-radius: 3px; color: #f4b33c; }
  .bbody { flex: 1; min-height: 0; display: flex; }
  .gutter { width: 10px; background: #2e363e; display: flex; flex-direction: column; justify-content: space-between; align-items: center; padding: 6px 0; color: #8f979d; }
  .gutter i { width: 2px; height: 32px; background: #9aa2a8; margin-top: 500px; }
  .tree { flex: 1; min-width: 0; display: flex; flex-direction: column; background: linear-gradient(90deg, #151d24, #1b242b); overflow: hidden; font: 16px Lato, "Noto Sans", sans-serif; white-space: pre; }
  .kshmr { height: 19px; background: #35333d; border-bottom: 1px solid #26252e; display: flex; align-items: center; gap: 8px; padding: 0 0 2px 84px; color: #bdc0c6; flex: none; font-size: 13px; line-height: 16px; }
  .clipicon { background: #d3925d; color: #3b2a20; padding: 2px 1px; }
  ul { list-style: none; height: 835px; flex: none; display: flex; flex-direction: column; padding: 0 0 0 12px; }
  li { flex: 1; display: flex; align-items: center; color: #78a88c; min-height: 0; padding-bottom: 2px; }
  li.hot { color: #b2ecc9; }
  li.long { font-size: 14px; }
  li.caps { font-size: 13px; }
  li span { margin-left: 8px; }
  .guide { width: 18px; align-self: stretch; border-left: 1px solid #3a4750; flex: none; margin-bottom: -2px; }
  .tick { width: 11px; border: 0; background: linear-gradient(#3a4750, #3a4750) 0 0 / 1px 100% no-repeat, linear-gradient(#3a4750, #3a4750) 0 50% / 9px 1px no-repeat; }
  .tick.last { background-size: 1px 50%, 9px 1px; }
  .zips { flex: 1; background: #3a3942; color: #b6b9c1; overflow: hidden; }
  .zips p { display: flex; align-items: center; gap: 7px; height: 26px; padding: 0 0 2px 6px; }

  .playlist { flex: 1; min-width: 0; display: flex; flex-direction: column; background: #444c53; margin-left: 6px; border-left: 1px solid #2c343a; }
  .phead { height: 19px; display: flex; align-items: center; padding-left: 8px; color: #8b9298; }
  .phead span { margin: 0 4px 0 5px; }
  .phead .m { margin: 0 11px 0 3px; }
  .ptools { display: flex; gap: 1px; margin-right: 10px; }
  .ptools button { width: 16px; height: 17px; }
  .ptools .act { color: #5b93b8; border: 1px solid #5b93b8; border-radius: 3px; }
  .pwin { margin: 0 6px 0 auto; display: flex; gap: 9px; }
  .pbody { flex: 1; min-height: 0; display: flex; }
  .picker { width: 129px; flex: none; display: flex; flex-direction: column; }
  .pktabs { height: 33px; display: grid; grid-template-columns: 36px 40px 44px; align-items: center; color: #80888e; padding-top: 8px; }
  .pktabs button { height: 19px; }
  .pktabs .sel { border: 1px solid #cfd5d9; border-radius: 4px; color: #d8dee2; }
  .pklist { flex: 1; display: flex; border: 1px solid #242c33; margin-right: 5px; }
  .items { flex: 1; background: #323c44; padding: 2px; }
  .items button { width: 100%; height: 22px; background: #414b52; justify-content: flex-start; gap: 5px; color: #dce2e5; }
  .items i { border: 5px solid transparent; border-left: 6px solid #ee4257; border-right: 0; }
  .bar { width: 13px; background: #363d42; border-left: 1px solid #242c33; }
  .bar span { display: block; height: 12px; background: #555d64; border: 1px solid #6d757b; }
  .pkadd { height: 16px; font-size: 16px; font-weight: 700; margin-right: 16px; }
  .arr { flex: 1; min-width: 0; display: grid; grid-template-columns: 89px 1fr 17px; grid-template-rows: 17px 16px 1fr; }
  .corner { grid-row: 1 / 3; background: #535b62; border: 1px solid #2a3137; border-radius: 16px 0 0 0; display: flex; flex-direction: column; justify-content: space-between; padding: 0 3px 1px 12px; color: #dfe5e8; }
  .corner > div { display: flex; align-items: center; justify-content: space-between; padding-left: 14px; }
  .corner em { display: flex; gap: 8px; color: #7b8389; }
  .corner .chk { padding: 0; font-size: 6px; font-weight: 700; color: #b5bcc1; }
  .chk label { display: flex; align-items: center; gap: 1px; }
  .chk input { appearance: none; width: 9px; height: 9px; margin: 0; border: 1px solid #b5bcc1; border-radius: 3px; }
  .hscroll { display: flex; gap: 1px; background: #2a3238; }
  .hscroll button, .dot, .vup, .vscroll button { width: 16px; background: #50585f; border: 1px solid #6b737a; color: #d3d9dc; }
  .hscroll span { flex: 1; border: 1px solid #93a1a8; margin: 1px 0; background: #4e5f66; }
  .dot i { width: 3px; height: 4px; background: #1c2227; }
  .ruler { background: linear-gradient(#202c35, #1b262e); overflow: hidden; min-width: 0; }
  .ruler > div { display: grid; grid-template-columns: repeat(94, minmax(0, 1fr)); margin-right: -4px; align-items: center; height: 16px; }
  .ruler span { font-size: 8px; color: #8b9aa2; padding-left: 1px; }
  .ruler .major { font-size: 10px; color: #a5b1b8; }
  .canvas { grid-column: 1 / 3; display: flex; min-width: 0; min-height: 0; overflow: hidden; }
  .tracks { width: 80px; flex: none; display: flex; flex-direction: column; margin-bottom: -4px; background: #333b42; font: 10px/12px "Noto Sans", sans-serif; }
  .lanes { flex: 1; min-width: 0; width: 100%; height: 100%; }
  .thead, .tgap { flex: 2 0 0; min-height: 0; display: flex; align-items: center; padding: 0 5px 0 2px; overflow: hidden; border-radius: 0 4px 0 4px; }
  .thead { background: #aebdd2; color: #1b2229; gap: 8px; font-size: 9px; }
  .thead span { flex: 1; }
  .thead .tri { border: 4px solid transparent; border-bottom: 5px solid #10151a; border-top: 0; }
  .tgap { background: #443f4b; justify-content: flex-end; }
  .led { width: 8px; height: 8px; border-radius: 50%; background: #a5e84a; border: 1px solid #3f5f22; flex: none; }
  .track { flex: 7 0 0; min-height: 0; margin-left: 5px; display: flex; flex-direction: column; justify-content: space-between; padding: 1px 5px 3px 2px; color: #f2f5f6; overflow: hidden; }
  .track > div { display: flex; align-items: center; gap: 4px; }
  .track em { margin-right: auto; padding-left: 4px; opacity: .5; }
  .red { background: #a34a48; }
  .rust { background: #a15a48; }
  .blue { background: #37708a; }
  .sea { background: #3c8567; }
  .pine { background: #337759; }
  .leaf { background: #50883b; }
  .olive { background: #897f3b; }
  .brick { background: #883b3a; }
  .cyan { background: #377484; }
  .vscroll { background: #343b40; display: flex; flex-direction: column; justify-content: space-between; align-items: center; }
  .vscroll i { width: 16px; height: 26px; background: #50585f; border: 1px solid #6b737a; }
  .vscroll button { height: 16px; }

  .rack { position: absolute; left: 359px; top: 131px; width: 1371px; background: #444c53; border: 1px solid #32393f; box-shadow: 0 2px 4px #1118; display: flex; flex-direction: column; }
  .rhead { height: 22px; display: flex; align-items: center; padding: 0 6px 0 7px; color: #8b9399; }
  .rhead > span { margin-left: 4px; }
  .rhead > .bk { margin: 0 48px 0 9px; }
  .rsel { width: 66px; height: 18px; background: #384046; border: 1px solid #2d353b; border-radius: 2px; display: flex; align-items: center; color: #596168; }
  .rsel select { appearance: none; background: none; border: 0; flex: 1; min-width: 0; font: 10px "Noto Sans", sans-serif; color: #788087; padding: 0 2px; }
  .dotted { border-left: 1px dashed #6b7379; height: 14px; margin: 0 10px 0 11px; }
  .rright { margin-left: auto; display: flex; align-items: center; gap: 8px; }
  .rdisp { width: 29px; height: 18px; border: 1px solid #353d43; border-radius: 3px; text-align: center; font-size: 8px; line-height: 16px; color: #6a7278; margin-left: 2px; }
  .stepbtn { width: 17px; height: 17px; border: 1px solid #b6924a; border-radius: 3px; color: #b6924a; margin-left: -4px; }
  .rbody { margin: 0 3px 0 2px; background: #60676d; border: 1px solid #394046; padding: 14px 15px 13px 6px; display: grid; grid-auto-rows: 24px; }
  .ch { display: flex; align-items: center; }
  .ch .led { margin-right: 2px; }
  .kn { width: 13px; height: 13px; border-radius: 50%; margin-right: 1px; background: linear-gradient(90deg, transparent 6px, #b9c0c4 6px, #b9c0c4 7px, transparent 7px) top / 100% 6px no-repeat, #363e43; border-bottom: 2px solid #262d31; }
  .kn.side { background: linear-gradient(#c8ced2, #c8ced2) 8px 6px / 4px 2px no-repeat, #363e43; }
  .kn.low { background: linear-gradient(#c8ced2, #c8ced2) 7px 8px / 2px 3px no-repeat, #363e43; }
  .num { width: 26px; height: 19px; border: 1px solid #40484d; border-radius: 3px; background: #555d63; margin: 0 7px 0 4px; display: flex; align-items: center; justify-content: flex-end; font: 13px Lato, "Noto Sans", sans-serif; color: #9aa2a7; gap: 1px; }
  .num small { font: 8px/7px "Noto Sans", sans-serif; padding: 0 1px; color: #737b81; }
  .cb { width: 66px; height: 20px; border-radius: 2px; color: #edf2f3; gap: 2px; padding: 0 3px; border-bottom: 2px solid #0004; border-top: 1px solid #fff3; }
  .cb span { flex: 1; text-align: center; white-space: nowrap; }
  .c-brown { background: #7b482c; }
  .c-violet { background: #7350b4; }
  .c-blue { background: #397595; }
  .c-sky { background: #3d80a0; }
  .c-teal { background: #3a7f93; }
  .c-green { background: #38876a; }
  .c-leaf { background: #4b8a3a; }
  .c-pink { background: #b04f85; }
  .selr { width: 5px; height: 18px; background: #535b61; border: 1px solid #3b4348; border-radius: 2px; margin: 0 8px 0 7px; }
  .selr.on { border-color: #a6e03b; height: 20px; }
  .steps { flex: 1; display: grid; grid-template-columns: repeat(92, minmax(0, 1fr)); }
  .steps button { height: 16px; margin: 0 2px 0 1px; border-radius: 2px; border: 1px solid #3a4246; border-bottom: 2px solid #2f363a; background: linear-gradient(#262c30, #262c30) 50% 3px / 6px 2px no-repeat, linear-gradient(#666e72, #4d5559); }
  .steps .alt { background: linear-gradient(#352326, #352326) 50% 3px / 6px 2px no-repeat, linear-gradient(#7d6265, #624f52); }
  .steps .off { opacity: .35; }
  .rfoot { height: 24px; display: flex; }
  .add { width: 170px; text-align: right; padding-right: 46px; font: 700 14px/22px "Noto Sans", sans-serif; flex: none; }
  .rfoot > div { flex: 1; padding-right: 19px; }
  .strip { display: block; height: 6px; background: repeating-linear-gradient(90deg, #343b42 0 205px, #2b3239 205px 410px); }
  .rfoot p { display: flex; align-items: center; height: 16px; margin: 0 -14px 0 -10px; }
  .rfoot b { width: 18px; height: 3px; background: #b4bbc0; }
  .rfoot em { margin-left: auto; }

  .surface { position: absolute; left: 229px; top: 241px; width: 233px; background: #475058; border: 1px solid #343b41; padding: 0 3px 4px; box-shadow: 0 1px 4px #0008; }
  .shead { height: 21px; display: flex; align-items: center; gap: 7px; padding: 2px 2px 0 3px; color: #8b9399; }
  .shead span { white-space: nowrap; }
  .shead em { color: #727a80; }
  .shead div { display: flex; gap: 7px; margin-left: auto; color: #a9b0b5; }
  .sbody { height: 353px; border: 1px solid #2b3238; border-radius: 4px; background: linear-gradient(#232323, #171717); text-align: center; padding: 3px 7px 0; color: #f4f4f4; }
  .stop-row { display: flex; align-items: flex-start; gap: 4px; margin-left: -4px; }
  .round { width: 28px; height: 28px; border-radius: 50%; background: #2d363d; border: 1px solid #0d1114; font-size: 13px; font-weight: 700; color: #dfe6ea; }
  .round.tap { margin: 0 11px 0 auto; }
  .fruit { width: 28px; height: 44px; margin-left: 34px; }
  h1 { font-size: 14px; line-height: 18px; margin-top: 4px; }
  h2 { font-size: 10px; line-height: 10px; }
  .mutes { margin: 29px 1px 0 0; height: 139px; border-radius: 4px; background: linear-gradient(#262e30, #182021); padding: 13px 10px 0; font-size: 12px; line-height: 16px; }
  .r3, .r4 { display: flex; justify-content: space-between; }
  .r3 { padding: 0 6px 0 3px; }
  .r4 { margin: 12px 1px 0 -2px; }
  .mc { display: flex; flex-direction: column; align-items: center; gap: 1px; width: 46px; }
  .hex { width: 37px; height: 33px; background: #000; color: #4a5054; font-size: 9px; clip-path: polygon(25% 0, 75% 0, 100% 50%, 75% 100%, 25% 100%, 0 50%); }
  .redbox { display: flex; background: linear-gradient(#403030, #332324); border-radius: 3px; padding: 4px 0; margin-top: -4px; height: 57px; }
  .o { color: #ef7a2d; }
  .g { color: #4ca554; }
  .y { color: #f0e45c; }
  .c { color: #7fd4de; }
  .v { color: #a77bd4; }
  .p { color: #c9608f; }
  .s { color: #35a368; }
  .knobs { display: flex; justify-content: space-between; padding: 16px 13px 0 11px; font-size: 12px; line-height: 14px; white-space: nowrap; }
  .knobs > div { display: flex; flex-direction: column; align-items: center; width: 52px; }
  .knobs svg { width: 44px; height: 50px; flex: none; }
  .knobs .post svg { width: 64px; height: 60px; }
  .sep { color: #6fe07a; padding-top: 3px; }
  .post { color: #f95a5d; }
  .sg { color: #f0884f; padding-top: 3px; }

  .taskbar { height: 39px; flex: none; display: grid; grid-template-columns: 1fr auto 1fr; align-items: center; background: #202425; }
  .weather { display: flex; align-items: center; gap: 8px; padding-left: 16px; line-height: 13px; }
  .weather i { width: 17px; height: 17px; border-radius: 50%; background: linear-gradient(135deg, #f9b83c, #ec6a12); }
  .weather span { color: #b4b8ba; }
  .apps { display: flex; align-items: center; height: 39px; padding-left: 8px; }
  .win { display: grid; grid-template-columns: 9px 9px; gap: 1px; margin-right: 11px; }
  .win i { height: 9px; background: linear-gradient(135deg, #6fd4ff, #1e9cf0); }
  .srch { width: 79px; height: 26px; border-radius: 13px; background: #2e3334; gap: 3px; font-size: 11px; color: #fff; margin-right: 4px; }
  .task { width: 35px; height: 32px; border-radius: 3px; }
  .run { background: linear-gradient(#9da2a4, #9da2a4) 50% 100% / 5px 2px no-repeat; }
  .cur { background: linear-gradient(#4cc2ff, #4cc2ff) 50% 100% / 14px 2px no-repeat, #2e3233; }
  .tray { display: flex; align-items: center; justify-content: flex-end; gap: 4px; padding-right: 15px; text-align: right; line-height: 13px; color: #eceeef; }
  .tray p { margin: 0 3px 0 4px; }
  .tray b { width: 16px; height: 16px; border-radius: 50%; background: #4cc2ff; color: #10202a; text-align: center; line-height: 16px; font-weight: 400; }
  .tm { color: #7fc5d4; margin: 0 4px 0 1px; }
  .sync { display: flex; align-items: flex-end; }
  .sync i { width: 7px; height: 7px; border-radius: 50%; background: #ff9a12; margin-left: -7px; }
</style>
